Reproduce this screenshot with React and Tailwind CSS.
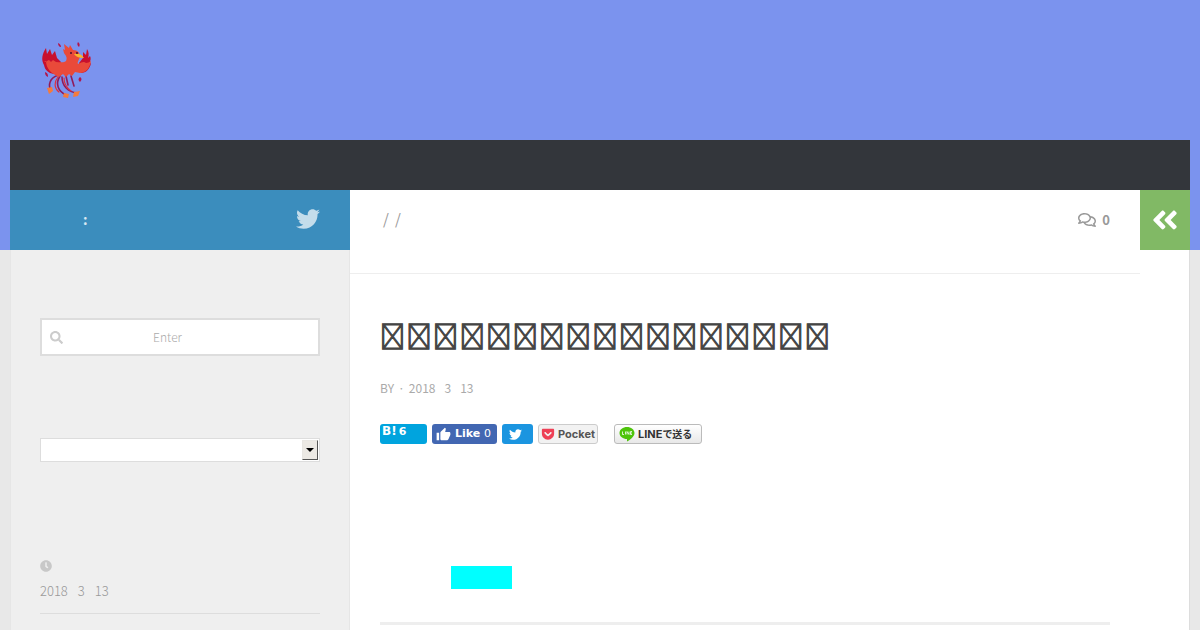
import React from 'react';
import { FaTwitter, FaSearch, FaRegComments, FaClock, FaAngleDoubleLeft, FaGetPocket } from 'react-icons/fa';
import { MdThumbUp } from 'react-icons/md';

const title = Array(17).fill('\uE000');

const Phoenix = () => {
    return (
        <svg viewBox="0 0 60 66" className="h-[66px] w-[60px]" aria-hidden="true">
            <g fill="none" stroke="#8f1b5c" strokeWidth="1.6" strokeLinecap="round">
                <path d="M24 39c-8 1-12 7-10 14" />
                <path d="M24 40c-5 8-2 15 6 19" />
                <path d="M26 41c0 9 6 15 15 16" />
                <path d="M30 40l2 9M35 40l3 10" />
            </g>
            <path fill="none" stroke="#e0303a" strokeWidth="1.2" strokeLinecap="round" d="M22 41c-4 5-4 11 1 15M28 42c0 6 3 10 7 13" />
            <path fill="#c8102e" d="M8 29C5 24 6 18 10 12l1 6 3-5 2 6 3-4 2 7 4 4-7 12C12 37 9 34 8 29zM51 13l-1 6-3-3v6l-4 5 2 10c5 0 9-4 10-10l-2 1c2-4 2-6 1-8l-2 2c1-3 1-6-1-9z" />
            <path fill="#e94a3a" d="M8 25c2 2 4-1 5-1l2 2 2-2 3 2c4 0 8 1 10-1 2-4-1-6-2-8l-1-4 2 1-1-6 5 4 1-3 3 5c5 0 7 3 7 7-1 3-3 5-2 7 4-2 6-3 8-1 2 0 3-1 5-2-1 7-5 12-11 12l-5-1-3 4-3-2-3 3-3-3-4 3c-7-3-13-8-13-16z" />
            <path fill="#f8b62d" d="M38 18c4-1 8 0 10 4-4 0-8-1-10-4z" />
            <g fill="#4a1030">
                <circle cx="35" cy="17" r="1" />
                <circle cx="41" cy="17" r="1" />
            </g>
            <g fill="#b3154a">
                <path d="M22 7c2 1 3 2 3 4-2 0-3-2-3-4zM42 6c2 2 2 3 1 5-2-2-2-3-1-5zM9 36c3 1 3 3 3 5-2-1-3-2-3-5zM44 41c2 1 2 3 0 5-2-2-2-3 0-5z" />
            </g>
            <g fill="#f47b3c">
                <path d="M11 52l5-1 1 4-4 3zM28 57l5 1-1 4-5-1zM38 56l6-1-2 5-5 1z" />
            </g>
        </svg>
    )
}

const Sidebar = () => {
    return (
        <aside className="w-[340px] shrink-0 border-r border-l border-[#e6e6e6] bg-[#efefef]">
            <div className="-mx-px flex h-[60px] items-center justify-between bg-[#3b8dbd] pr-[30px] pb-0.5 pl-[73px] text-white">
                <span className="text-sm font-bold text-white/80">:</span>
                <a href="#twitter" aria-label="Twitter" className="text-white/70"><FaTwitter size={24} /></a>
            </div>
            <div className="px-[29px] pt-[68px]">
                <label className="flex h-[38px] items-center border-2 border-[#dddddd] bg-white pl-2 text-[#cccccc]">
                    <FaSearch size={13} className="shrink-0" />
                    <input type="text" aria-label="Search" placeholder="Enter" className="w-full min-w-0 pr-[46px] text-center text-xs font-light outline-none placeholder:text-[#aaaaaa]" />
                </label>
                <div className="relative mt-[82px]">
                    <select aria-label="Archive" className="block h-6 w-full appearance-none border border-[#dddddd] bg-white"></select>
                    <span className="pointer-events-none absolute top-0.5 right-0.5 flex h-5 w-4 items-center justify-center border border-t-[#e8e6e2] border-r-[#555555] border-b-[#555555] border-l-[#e8e6e2] bg-[#ece9e4]">
                        <span className="border-x-4 border-t-4 border-x-transparent border-t-black"></span>
                    </span>
                </div>
                <div className="mt-[98px] border-b border-[#dddddd] pb-3">
                    <FaClock size={12} className="text-[#c8c8c8]" />
                    <p className="mt-[9px] flex gap-2.5 text-[13px] leading-5 font-light text-[#999999]"><span>2018</span><span>3</span><span>13</span></p>
                </div>
            </div>
        </aside>
    )
}

const Share = () => {
    return (
        <div className="mt-[26px] flex h-5 gap-[5px] text-[11px] leading-5 font-bold">
            <button className="flex w-[47px] items-start gap-0.5 rounded-[3px] bg-[#00a4de] pl-0.5 font-['DejaVu_Sans',sans-serif] leading-4 text-white"><span className="text-xs leading-[14px]">B!</span>6</button>
            <button className="flex w-[65px] items-center gap-1 rounded-[3px] bg-[#4267b2] pl-1 font-['DejaVu_Sans',sans-serif] text-white">
                <MdThumbUp size={15} className="shrink-0" />
                <span>Like <span className="font-normal">0</span></span>
            </button>
            <button aria-label="Tweet" className="flex w-[31px] items-center justify-center rounded-[3px] bg-[#1b95e0] pr-1 text-white"><FaTwitter size={13} /></button>
            <button className="flex w-[60px] items-center gap-[3px] rounded-[3px] border border-[#cccccc] bg-[#f2f2f2] pl-0.5 font-['Inter',sans-serif] text-[#555555]"><FaGetPocket size={14} className="shrink-0 text-[#ee4056]" />Pocket</button>
            <button className="ml-[11px] flex w-[88px] items-center gap-[3px] rounded-[3px] border border-[#bbbbbb] bg-linear-to-b from-white to-[#e8e8e8] pl-1 whitespace-nowrap text-[#333333]">
                <svg viewBox="0 0 16 16" className="size-4 shrink-0" aria-hidden="true">
                    <path fill="#4ec40b" d="M8 1c4 0 7.500 2.600 7.500 6 0 3.800-5 7.300-7.500 8.500v-2.500C4 13 .5 10.600.5 7S4 1 8 1z" />
                    <path fill="none" stroke="#fff" strokeWidth=".8" d="M3.500 5.500v3H5M6.500 5.500v3M8 8.500v-3l2 3v-3M13 5.500h-1.500v3H13M11.500 7H13" />
                </svg>
                <span className="font-['Inter','Noto_Sans_CJK_JP',sans-serif]">LINE<span className="text-[10px]">で送る</span></span>
            </button>
        </div>
    )
}

const App = () => {
    return (
        <div className="min-h-screen bg-[#e8e8e8] bg-[linear-gradient(#7b93ee,#7b93ee)] bg-[length:100%_250px] bg-no-repeat px-2.5 font-['Noto_Sans_CJK_JP',sans-serif]">
            <div className="flex min-h-screen flex-col">
                <header className="px-[26px] pt-9 pb-[38px]">
                    <a href="#home" aria-label="Home" className="inline-block align-top"><Phoenix /></a>
                </header>
                <nav className="h-[50px] bg-[#33363b]"></nav>
                <div className="flex grow bg-white">
                    <Sidebar />
                    <main className="min-w-0 grow">
                        <div className="flex h-[84px] items-start justify-between border-b border-[#eeeeee] px-[30px] pt-[18px] text-[#999999]">
                            <p className="flex gap-1.5 pl-[3px] text-[15px] leading-[22px]"><span>/</span><span>/</span></p>
                            <a href="#comments" className="flex items-center gap-1.5 text-[13px] leading-6 font-bold"><FaRegComments size={18} />0</a>
                        </div>
                        <div className="px-[30px]">
                            <h1 className="mt-[42px] flex max-w-[450px] justify-between text-[25px] leading-[38px] font-bold text-[#444444] [-webkit-text-stroke:1px_#444444]">
                                {title.map((c, i) => <span key={i}>{c}</span>)}
                            </h1>
                            <p className="mt-6 flex gap-[9px] text-xs leading-5 text-[#aaaaaa]"><span className="flex gap-1"><span>BY</span><span>·</span><span>2018</span></span><span>3</span><span>13</span></p>
                            <Share />
                            <div className="mt-[122px] ml-[71px] h-[23px] w-[61px] bg-[#00ffff]"></div>
                            <hr className="mt-[33px] border-t-3 border-[#eeeeee]" />
                        </div>
                    </main>
                    <div className="w-[50px] shrink-0 border-r border-[#dddddd]">
                        <button aria-label="Expand sidebar" className="-mr-px flex h-[60px] w-[50px] items-center justify-center bg-[#81b965] text-white"><FaAngleDoubleLeft size={30} /></button>
                    </div>
                </div>
            </div>
        </div>
    )
}
export default App;
